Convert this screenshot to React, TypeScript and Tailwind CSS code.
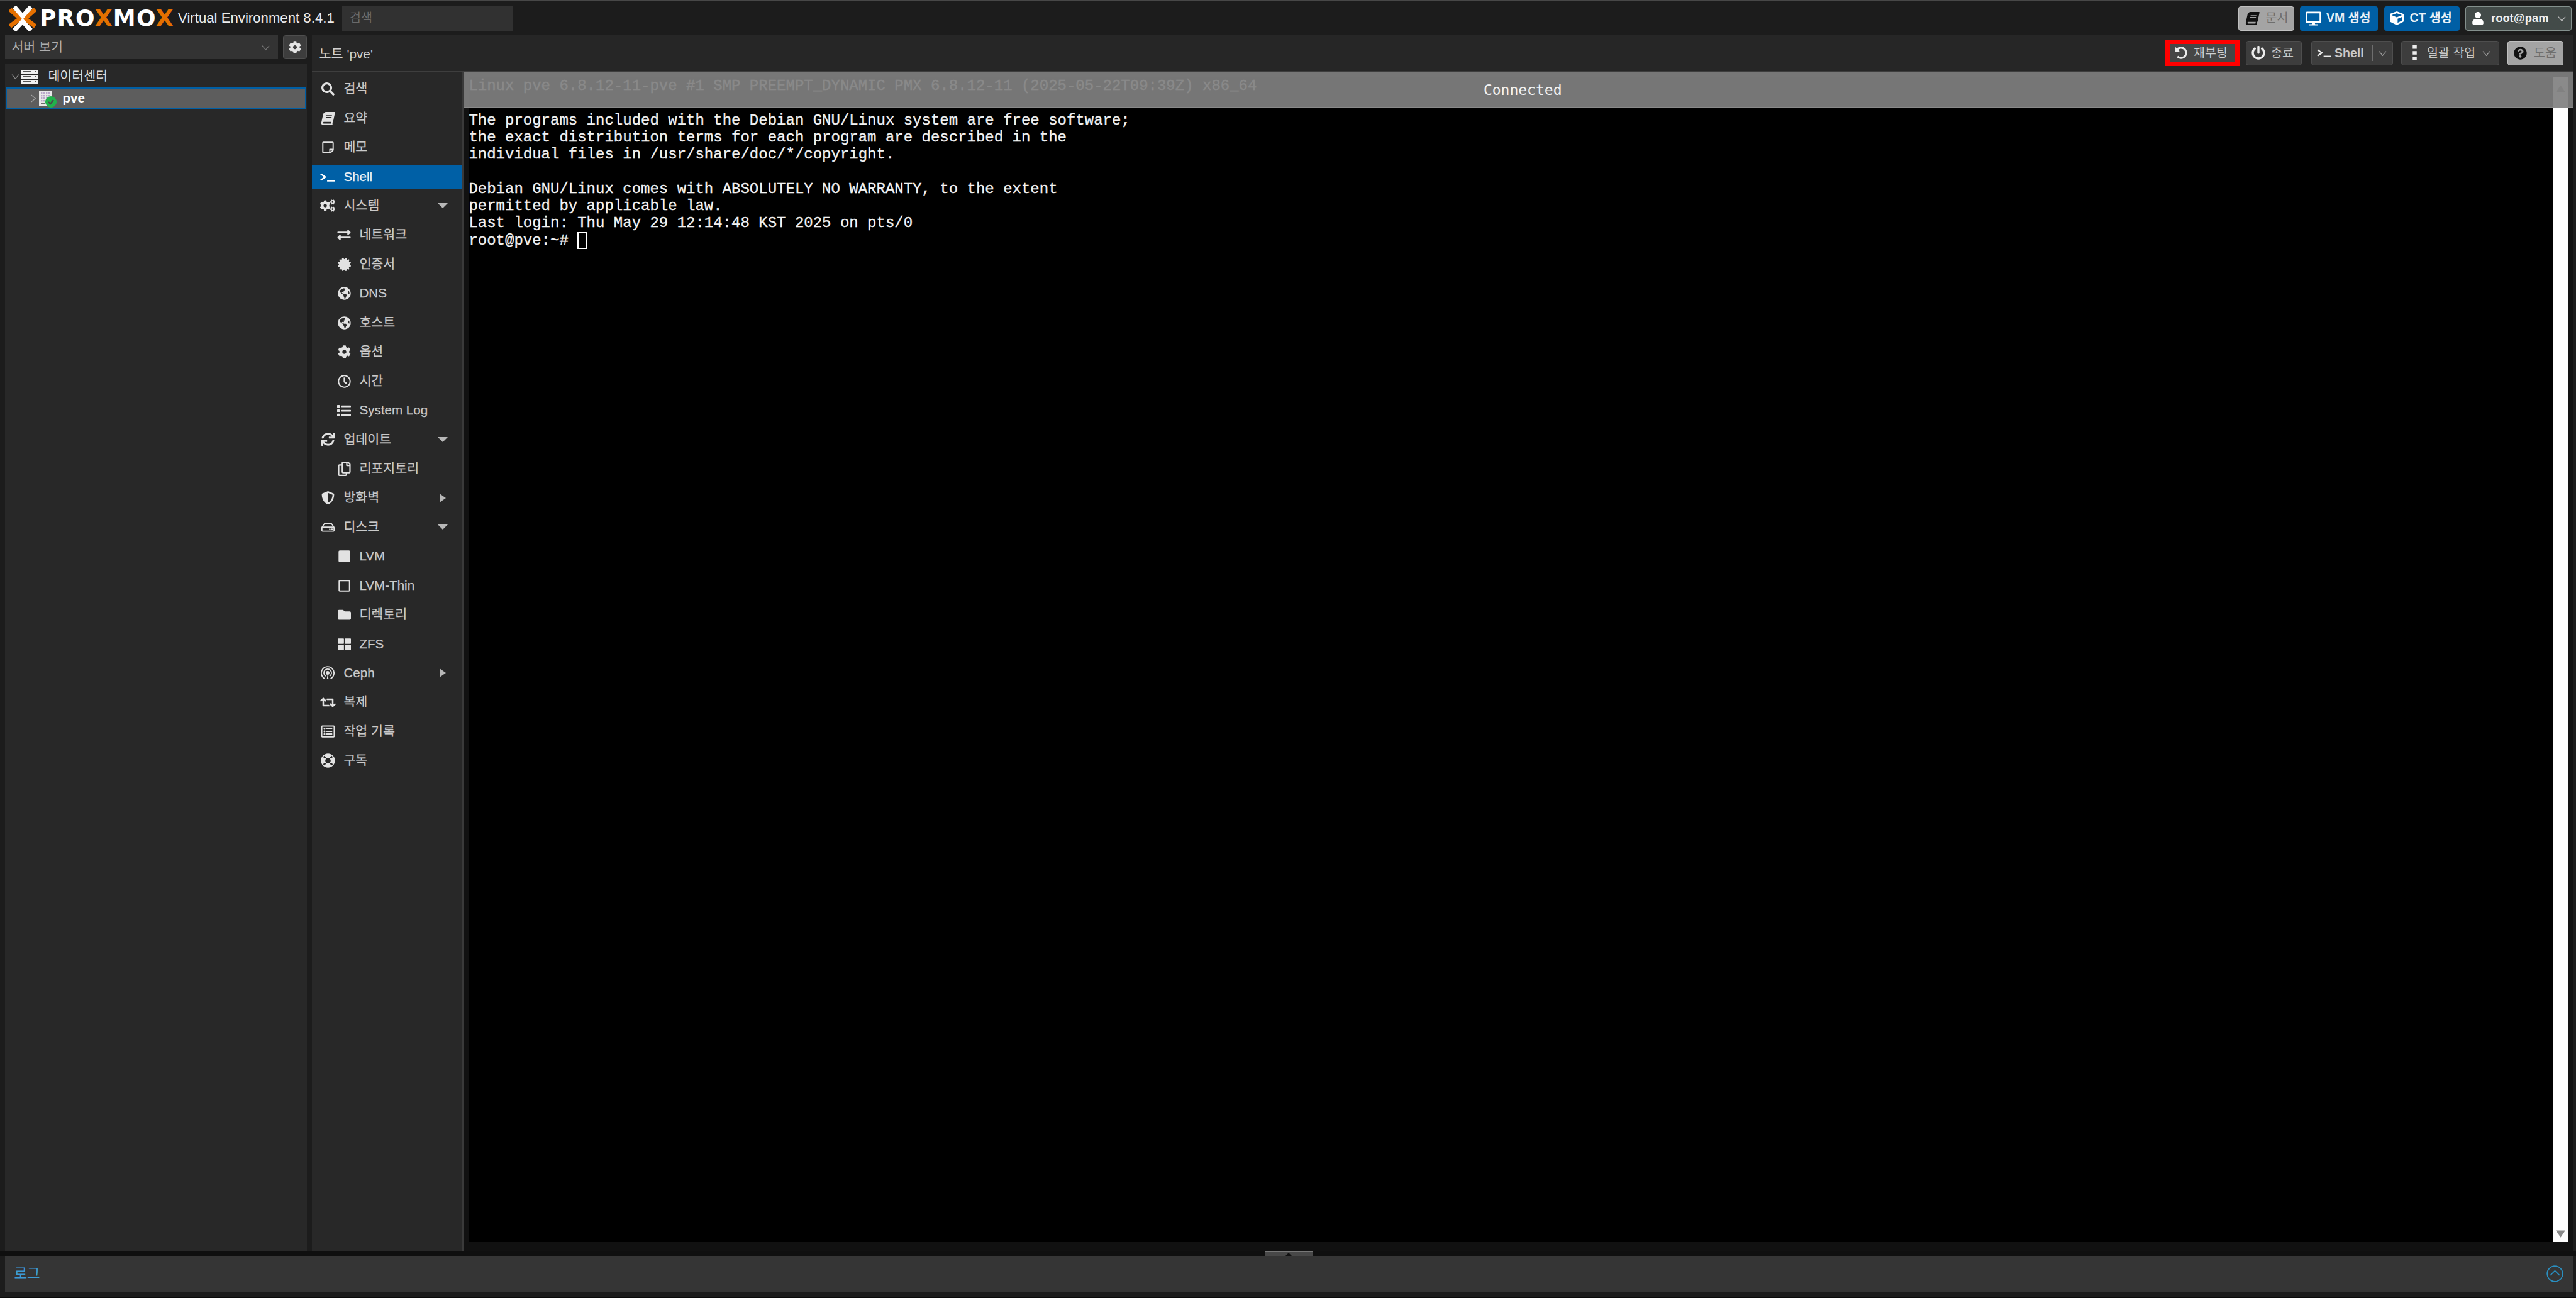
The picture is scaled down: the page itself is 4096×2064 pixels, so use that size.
import React from "react";
import {
  FaBook,
  FaCertificate,
  FaCog,
  FaCogs,
  FaCube,
  FaDesktop,
  FaExchangeAlt,
  FaFolder,
  FaGlobeAmericas,
  FaLifeRing,
  FaList,
  FaPowerOff,
  FaQuestionCircle,
  FaRegClock,
  FaRegCopy,
  FaRegHdd,
  FaRegListAlt,
  FaRegSquare,
  FaRegStickyNote,
  FaRetweet,
  FaSearch,
  FaShieldAlt,
  FaSquare,
  FaSync,
  FaThLarge,
  FaUndoAlt,
  FaUser,
} from "react-icons/fa";

const Chevron = ({ dir = "down", className = "" }: { dir?: "down" | "right" | "up"; className?: string }) => (
  <svg viewBox="0 0 14 14" className={className} fill="none" stroke="currentColor" strokeWidth="1.3">
    {dir === "down" && <polyline points="1,4 7,11 13,4" />}
    {dir === "right" && <polyline points="4,1 11,7 4,13" />}
    {dir === "up" && <polyline points="1,10 7,3 13,10" />}
  </svg>
);

const Prompt = ({ className = "" }: { className?: string }) => (
  <svg viewBox="0 0 26 16" className={className} fill="none" stroke="currentColor" strokeWidth="2.6">
    <polyline points="1,2.5 9,8 1,13.5" />
    <line x1="12" y1="14.5" x2="26" y2="14.5" />
  </svg>
);

const Dots = () => (
  <svg viewBox="0 0 8 26" className="h-[24px] w-[8px]" fill="currentColor">
    <rect x="0" y="0" width="7" height="6" />
    <rect x="0" y="10" width="7" height="6" />
    <rect x="0" y="20" width="7" height="6" />
  </svg>
);

const Ceph = ({ className = "" }: { className?: string }) => (
  <svg viewBox="0 0 24 24" className={className} fill="none" stroke="currentColor" strokeWidth="2">
    <path d="M7 22 A11 11 0 1 1 17 22" />
    <path d="M8.6 17.6 A6.6 6.6 0 1 1 15.4 17.6" />
    <circle cx="12" cy="12" r="2.2" fill="currentColor" />
    <path d="M10.6 22 L12 14 L13.4 22" fill="currentColor" stroke="none" />
  </svg>
);

const Logo = () => (
  <div className="flex items-center">
    <svg viewBox="30 22 160 140" className="h-[41px] w-[47px]" fill="none" strokeWidth="24">
      <path d="M46 42 L102 92 L46 134" stroke="#e57000" />
      <path d="M184 42 L128 92 L184 134" stroke="#e57000" />
      <path d="M70 28 L115 80 L160 28" stroke="#ffffff" />
      <path d="M70 156 L115 108 L160 156" stroke="#ffffff" />
    </svg>
    <span className="ml-[5px] w-[216px] text-[36px] leading-none font-bold tracking-[1.4px] whitespace-nowrap text-white [font-family:'DejaVu_Sans',sans-serif]">
      PRO<span className="text-[#e57000]">X</span>MO<span className="text-[#e57000]">X</span>
    </span>
  </div>
);

const ServerStack = () => (
  <svg viewBox="0 0 28 22" className="h-[22px] w-[28px]">
    {[0, 8, 16].map((y) => (
      <g key={y}>
        <rect x="0" y={y} width="28" height="6" fill="#f0f0f0" />
        <rect x="3" y={y + 2} width="13" height="1.6" fill="#555555" />
        <rect x="23" y={y + 2} width="2" height="2" fill="#555555" />
      </g>
    ))}
  </svg>
);

const NodeIcon = () => (
  <div className="relative h-[25px] w-[26px]">
    <svg viewBox="0 0 22 25" className="h-[25px] w-[22px]">
      <rect x="0" y="0" width="21" height="25" fill="#e8e8e8" />
      {[3, 7, 11, 15].map((y) =>
        [3, 7, 11, 15].map((x) => (
          <rect key={`${x}-${y}`} x={x} y={y} width="2.4" height="2.4" fill={(x + y) % 4 === 2 ? "#b9a7c9" : "#b5b5b5"} />
        ))
      )}
      <rect x="3" y="20" width="7" height="2" fill="#6a6a6a" />
    </svg>
    <svg viewBox="0 0 18 18" className="absolute right-[-2px] bottom-[-2px] h-[18px] w-[18px]">
      <circle cx="9" cy="9" r="9" fill="#21b14b" />
      <polyline points="5,9 8,12 13,6" fill="none" stroke="#4a4a4a" strokeWidth="2.2" />
    </svg>
  </div>
);

type NavItem = {
  label: string;
  icon: React.ReactNode;
  sub?: boolean;
  active?: boolean;
  caret?: "down" | "right";
};

const ic = "h-[21px] w-[21px]";

const NAV: NavItem[] = [
  { label: "검색", icon: <FaSearch className={ic} /> },
  { label: "요약", icon: <FaBook className={`${ic} -skew-x-12`} /> },
  { label: "메모", icon: <FaRegStickyNote className={ic} /> },
  { label: "Shell", icon: <Prompt className="h-[15px] w-[24px]" />, active: true },
  { label: "시스템", icon: <FaCogs className="h-[24px] w-[24px]" />, caret: "down" },
  { label: "네트워크", icon: <FaExchangeAlt className="h-[21px] w-[24px]" />, sub: true },
  { label: "인증서", icon: <FaCertificate className={ic} />, sub: true },
  { label: "DNS", icon: <FaGlobeAmericas className={ic} />, sub: true },
  { label: "호스트", icon: <FaGlobeAmericas className={ic} />, sub: true },
  { label: "옵션", icon: <FaCog className={ic} />, sub: true },
  { label: "시간", icon: <FaRegClock className={ic} />, sub: true },
  { label: "System Log", icon: <FaList className="h-[22px] w-[24px]" />, sub: true },
  { label: "업데이트", icon: <FaSync className={ic} />, caret: "down" },
  { label: "리포지토리", icon: <FaRegCopy className="h-[23px] w-[23px]" />, sub: true },
  { label: "방화벽", icon: <FaShieldAlt className={ic} />, caret: "right" },
  { label: "디스크", icon: <FaRegHdd className={ic} />, caret: "down" },
  { label: "LVM", icon: <FaSquare className={ic} />, sub: true },
  { label: "LVM-Thin", icon: <FaRegSquare className={ic} />, sub: true },
  { label: "디렉토리", icon: <FaFolder className="h-[21px] w-[23px]" />, sub: true },
  { label: "ZFS", icon: <FaThLarge className="h-[21px] w-[23px]" />, sub: true },
  { label: "Ceph", icon: <Ceph className="h-[22px] w-[22px]" />, caret: "right" },
  { label: "복제", icon: <FaRetweet className="h-[22px] w-[25px]" /> },
  { label: "작업 기록", icon: <FaRegListAlt className="h-[22px] w-[25px]" /> },
  { label: "구독", icon: <FaLifeRing className="h-[23px] w-[23px]" /> },
];

const Caret = ({ dir }: { dir: "down" | "right" }) =>
  dir === "down" ? (
    <svg viewBox="0 0 16 8" className="absolute top-[15px] right-[23px] h-[8px] w-[16px]" fill="#b8b8b8">
      <polygon points="0,0 16,0 8,8" />
    </svg>
  ) : (
    <svg viewBox="0 0 10 14" className="absolute top-[12px] right-[26px] h-[14px] w-[10px]" fill="#b8b8b8">
      <polygon points="0,0 10,7 0,14" />
    </svg>
  );

const NavRow = ({ item }: { item: NavItem }) => (
  <div
    className={`relative flex h-[38.45px] shrink-0 items-center text-[20.6px] [-webkit-text-stroke:0.25px] ${item.sub ? "pl-[38px]" : "pl-[12px]"} ${
      item.active ? "bg-[#0060a6] text-[#e8f0f6]" : "text-[#cacaca]"
    }`}
  >
    <span className={`flex w-[26px] justify-center ${item.active ? "text-white" : "text-[#e2e2e2]"}`}>{item.icon}</span>
    <span className={item.sub ? "ml-[11px]" : "ml-[12px]"}>{item.label}</span>
    {item.caret && <Caret dir={item.caret} />}
  </div>
);

const DarkBtn = ({ className = "", children }: { className?: string; children: React.ReactNode }) => (
  <div
    className={`flex h-[39px] items-center rounded-[4px] border border-[#4e4e4e] bg-[#3d3d3d] text-[19.5px] text-[#c8c8c8] ${className}`}
  >
    {children}
  </div>
);

const GrayBtn = ({ className = "", children }: { className?: string; children: React.ReactNode }) => (
  <div
    className={`flex h-[39px] items-center rounded-[4px] border border-[#c0c0c0] bg-[#a4a4a4] text-[19.5px] text-[#6e6e6e] ${className}`}
  >
    {children}
  </div>
);

const BlueBtn = ({ className = "", children }: { className?: string; children: React.ReactNode }) => (
  <div
    className={`flex h-[39px] items-center rounded-[4px] bg-[#005fa5] text-[19.5px] font-bold text-[#e8f0f6] ${className}`}
  >
    {children}
  </div>
);

const Header = () => (
  <div className="flex h-[56px] shrink-0 items-center border-t-2 border-[#474747] pr-[7px] pl-[11px]">
    <Logo />
    <span className="ml-[4px] w-[261px] text-[22.2px] whitespace-nowrap text-[#ececec]">Virtual Environment 8.4.1</span>
    <div className="flex h-[39px] w-[271px] items-center bg-[#313131] pl-[12px] text-[19.5px] text-[#6a6a6a]">검색</div>
    <div className="ml-auto flex items-center gap-[9.5px]">
      <GrayBtn className="w-[89px] pl-[11px]">
        <FaBook className="h-[21px] w-[21px] -skew-x-12 text-[#111]" />
        <span className="ml-[11px]">문서</span>
      </GrayBtn>
      <BlueBtn className="w-[124px] pl-[9px]">
        <FaDesktop className="h-[23px] w-[25px] text-white" />
        <span className="ml-[8px]">VM 생성</span>
      </BlueBtn>
      <BlueBtn className="w-[120px] pl-[9px]">
        <FaCube className="h-[22px] w-[22px] text-white" />
        <span className="ml-[10px]">CT 생성</span>
      </BlueBtn>
      <div className="flex h-[39px] w-[169px] items-center rounded-[4px] border border-[#84908d] bg-[#434b49] pl-[9px] text-[18.4px] font-bold text-[#eeeeee]">
        <FaUser className="h-[20px] w-[20px] text-white" />
        <span className="ml-[11px]">root@pam</span>
        <Chevron className="ml-[14px] h-[13px] w-[13px] text-[#bdbdbd]" />
      </div>
    </div>
  </div>
);

const LeftColumn = () => (
  <div className="flex w-[480px] shrink-0 flex-col">
    <div className="flex h-[38px] shrink-0 gap-[8px]">
      <div className="flex flex-1 items-center bg-[#333333] pr-[13px] pl-[10px] text-[20.6px] text-[#adadad]">
        <span>서버 보기</span>
        <Chevron className="ml-auto h-[13px] w-[13px] text-[#777]" />
      </div>
      <div className="flex w-[38px] items-center justify-center rounded-[4px] border border-[#4e4e4e] bg-[#3d3d3d]">
        <FaCog className="h-[20px] w-[20px] text-[#e4e4e4]" />
      </div>
    </div>
    <div className="mt-[8px] flex-1 bg-[#282828] text-[20.6px]">
      <div className="flex h-[37px] items-center pt-[2px] pl-[10px] text-[#dcdcdc]">
        <Chevron className="h-[13px] w-[13px] text-[#8a8a8a]" />
        <span className="ml-[2px]">
          <ServerStack />
        </span>
        <span className="ml-[15px]">데이터센터</span>
      </div>
      <div className="mx-[1px] flex h-[35px] items-center border-2 border-[#005fa5] bg-[#5d5d5d] pl-[35px] font-bold text-white">
        <Chevron dir="right" className="h-[13px] w-[13px] text-[#a8a8a8]" />
        <span className="ml-[3px]">
          <NodeIcon />
        </span>
        <span className="ml-[11px]">pve</span>
      </div>
    </div>
  </div>
);

const Toolbar = () => (
  <div className="flex h-[58.5px] shrink-0 items-center border-b-2 border-[#3e3e3e] bg-[#262626] pr-[15px] pl-[11px] text-[#d0d0d0]">
    <span className="pt-[3px] text-[20.8px]">노트 'pve'</span>
    <div className="ml-auto flex items-center">
      <div className="flex h-[41px] w-[119px] items-center border-x-[8px] border-y-[6px] border-[#ff0000] bg-[#464646] pl-[8px] text-[19.5px] text-[#d0d0d0]">
        <FaUndoAlt className="h-[20px] w-[20px] text-[#ececec]" />
        <span className="ml-[10px]">재부팅</span>
      </div>
      <DarkBtn className="ml-[10px] w-[89px] pl-[8px]">
        <FaPowerOff className="h-[22px] w-[22px] text-[#ececec]" />
        <span className="ml-[9px]">종료</span>
      </DarkBtn>
      <DarkBtn className="ml-[15px] w-[130px] pl-[8px] font-bold">
        <Prompt className="h-[14px] w-[23px] text-[#ececec]" />
        <span className="ml-[5px]">Shell</span>
        <span className="ml-[13px] h-[25px] w-[1px] bg-[#6e6e6e]" />
        <Chevron className="ml-[9px] h-[13px] w-[13px] text-[#a0a0a0]" />
      </DarkBtn>
      <DarkBtn className="ml-[13px] w-[156px] pl-[17px]">
        <span className="text-[#ececec]">
          <Dots />
        </span>
        <span className="ml-[15px]">일괄 작업</span>
        <Chevron className="ml-[11px] h-[13px] w-[13px] text-[#a0a0a0]" />
      </DarkBtn>
      <GrayBtn className="ml-[13px] w-[89px] pl-[9px]">
        <FaQuestionCircle className="h-[21px] w-[21px] text-[#111]" />
        <span className="ml-[11px]">도움</span>
      </GrayBtn>
    </div>
  </div>
);

const Terminal = () => (
  <div className="relative flex flex-1 bg-[#111111] pt-[8.5px] pr-[8px] pb-[15px] pl-[8px]">
    <pre className="flex-1 bg-black text-[24px] leading-[27.3px] text-[#f2f2f2] [-webkit-text-stroke:0.35px] [font-family:'Liberation_Mono',monospace]">
      {`Linux pve 6.8.12-11-pve #1 SMP PREEMPT_DYNAMIC PMX 6.8.12-11 (2025-05-22T09:39Z) x86_64

The programs included with the Debian GNU/Linux system are free software;
the exact distribution terms for each program are described in the
individual files in /usr/share/doc/*/copyright.

Debian GNU/Linux comes with ABSOLUTELY NO WARRANTY, to the extent
permitted by applicable law.
Last login: Thu May 29 12:14:48 KST 2025 on pts/0
root@pve:~# `}
      <span className="inline-block h-[27px] w-[14.4px] border-2 border-white align-top" />
    </pre>
    <div className="flex w-[24px] flex-col items-center justify-between bg-[#fdfdfd] pt-[12px] pb-[7px]">
      <svg viewBox="0 0 16 12" className="h-[12px] w-[15px]" fill="#8a8a8a">
        <polygon points="8,0 16,12 0,12" />
      </svg>
      <svg viewBox="0 0 16 12" className="h-[12px] w-[15px]" fill="#8a8a8a">
        <polygon points="0,0 16,0 8,12" />
      </svg>
    </div>
    {/* status overlay */}
    <div className="absolute top-0 right-0 left-0 flex h-[56.5px] items-center justify-center border-b border-[#8a8a8a] bg-[#808080]/92 pt-[2px] pl-[14px] text-[23px] text-[#f2f2f2] [font-family:'DejaVu_Sans_Mono',monospace]">
      Connected
    </div>
  </div>
);

const ResizeStrip = () => (
  <div className="flex h-[8px] shrink-0 justify-center bg-[#0f0f0f] pl-[2px]">
    <div className="flex h-[8px] w-[77px] justify-center border-x border-t border-[#777777] bg-[#484848] pt-[1px]">
      <svg viewBox="0 0 14 7" className="h-[7px] w-[14px]" fill="#111111">
        <polygon points="7,0 14,7 0,7" />
      </svg>
    </div>
  </div>
);

const LogPanel = () => (
  <div className="mr-[5px] ml-[8.4px] flex h-[55.5px] shrink-0 items-center bg-[#353535] pr-[15px] pl-[14px] text-[22.5px] text-[#3d9bd4]">
    <span>로그</span>
    <svg viewBox="0 0 28 28" className="ml-auto h-[27px] w-[27px]" fill="none" stroke="#2a8fc0" strokeWidth="1.8">
      <circle cx="14" cy="14" r="12.8" />
      <polyline points="6.5,16.5 14,9 21.5,16.5" />
    </svg>
  </div>
);

export default function App() {
  return (
    <div className="flex h-[2064px] w-[4096px] flex-col overflow-hidden bg-[#1c1c1c] [font-family:'Liberation_Sans','Noto_Sans_CJK_KR',sans-serif]">
      <Header />
      <div className="flex min-h-0 flex-1 gap-[8px] pr-[5px] pl-[8.4px]">
        <LeftColumn />
        <div className="flex min-w-0 flex-1 flex-col">
          <Toolbar />
          <div className="flex min-h-0 flex-1">
            <div className="flex w-[241px] shrink-0 flex-col gap-[8px] border-r-2 border-[#3a3a3a] bg-[#282828] pt-[8px]">
              {NAV.map((item) => (
                <NavRow key={item.label} item={item} />
              ))}
            </div>
            <Terminal />
          </div>
        </div>
      </div>
      <ResizeStrip />
      <LogPanel />
      <div className="h-[8.5px] shrink-0 bg-[#1c1c1c]" />
      <div className="h-[2px] shrink-0 bg-[#0a0a0a]" />
    </div>
  );
}
